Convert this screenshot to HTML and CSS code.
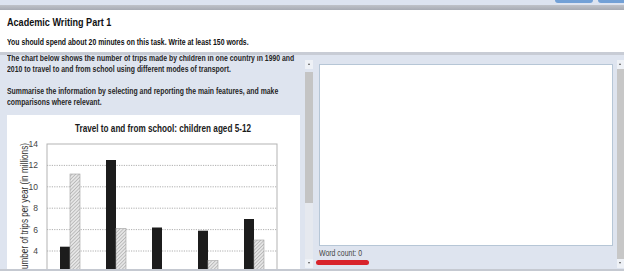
FILE: index.html
```html
<!DOCTYPE html>
<html lang="en">
<head>
  <meta charset="UTF-8" />
  <title>Academic Writing Part 1</title>
  <link rel="stylesheet" href="styles.css">
</head>
<body>

<!-- top toolbar -->
<div class="topbar">
  <span class="tb-btn"></span>
  <span class="tb-btn wide"></span>
</div>
<div class="topbar-rule"></div>

<!-- task header -->
<div class="header">
  <h1>Academic Writing Part 1</h1>
  <p>You should spend about 20 minutes on this task. Write at least 150 words.</p>
</div>
<div class="header-rule"></div>

<div class="main">

  <!-- question pane -->
  <div class="question">
    <div class="question-inner">
      <div class="prompt">
        <p>The chart below shows the number of trips made by children in one country in 1990 and 2010 to travel to and from school using different modes of transport.</p>
        <p>Summarise the information by selecting and reporting the main features, and make comparisons where relevant.</p>
      </div>

      <div class="chart">
        <svg width="293" height="160" viewBox="0 0 293 160">
          <defs>
            <pattern id="hatch" patternUnits="userSpaceOnUse" width="2.5" height="2.5" patternTransform="rotate(45)">
              <rect width="2.5" height="2.5" fill="#e6e6e6"/>
              <line x1="0" y1="0" x2="0" y2="2.5" stroke="#8f8f8f" stroke-width="0.9"/>
            </pattern>
          </defs>

          <text class="chart-title" x="156" y="17" text-anchor="middle" textLength="176" lengthAdjust="spacingAndGlyphs">Travel to and from school: children aged 5-12</text>

          <text class="axis-title" transform="translate(21,28) rotate(-90)" text-anchor="end" textLength="132" lengthAdjust="spacingAndGlyphs">Number of trips per year (in millions)</text>

          <!-- grid -->
          <g class="grid">
            <line x1="40" y1="50.4" x2="270" y2="50.4"/>
            <line x1="40" y1="71.8" x2="270" y2="71.8"/>
            <line x1="40" y1="93.2" x2="270" y2="93.2"/>
            <line x1="40" y1="114.6" x2="270" y2="114.6"/>
            <line x1="40" y1="136" x2="270" y2="136"/>
            <line x1="40" y1="157.4" x2="270" y2="157.4"/>
          </g>
          <rect class="frame" x="40" y="29" width="230" height="160"/>

          <g class="ticks">
            <text x="31" y="32">14</text>
            <text x="31" y="53.4">12</text>
            <text x="31" y="74.8">10</text>
            <text x="31" y="96.2">8</text>
            <text x="31" y="117.6">6</text>
            <text x="31" y="139">4</text>
          </g>

          <!-- 1990 = black, 2010 = hatched -->
          <g class="bar-dark">
            <rect x="53" y="131.7" width="10" height="60"/>
            <rect x="99" y="45" width="10" height="150"/>
            <rect x="145" y="112.5" width="10" height="80"/>
            <rect x="191" y="115.7" width="10" height="80"/>
            <rect x="237" y="104" width="10" height="90"/>
          </g>
          <g class="bar-light">
            <rect x="63" y="59" width="10" height="140"/>
            <rect x="109" y="113.5" width="10" height="80"/>
            <rect x="155" y="170" width="10" height="30"/>
            <rect x="201" y="145.6" width="10" height="50"/>
            <rect x="247" y="125" width="10" height="70"/>
          </g>
        </svg>
      </div>
    </div>
  </div>

  <div class="scrollbar left-bar">
    <span class="arrow up"></span>
    <span class="thumb"></span>
    <span class="track"></span>
    <span class="arrow down"></span>
  </div>

  <!-- answer pane -->
  <div class="answer">
    <textarea class="answer-box"></textarea>
    <div class="word-count">Word count: 0</div>
    <div class="red-line"></div>
  </div>

  <div class="scrollbar right-bar">
    <span class="arrow up"></span>
    <span class="thumb"></span>
    <span class="arrow down"></span>
  </div>
</div>

<div class="footer-rule"></div>

</body>
</html>
```

FILE: styles.css
```css
/* page */
body {
  margin: 0;
  width: 624px;
  height: 279px;
  overflow: hidden;
  background: #ffffff;
  font-family: "Liberation Sans", Arial, sans-serif;
  color: #1e1e1e;
}

/* toolbar strip */
.topbar {
  height: 5px;
  background: #dce3f0;
  display: flex;
  justify-content: flex-end;
  gap: 5px;
}

.tb-btn {
  width: 38px;
  height: 3px;
  background: #72a0d6;
  border-radius: 0 0 3px 3px;
}

.tb-btn.wide {
  width: 30px;
  margin-right: -4px;
}

.topbar-rule {
  height: 5px;
  background: linear-gradient(#bfc2c9, #a7abb4);
}

/* header (the screenshot text is a bit condensed) */
.header {
  height: 42px;
  padding: 0 7px;
  background: #ffffff;
}

.header h1 {
  margin: 0;
  padding-top: 5px;
  font-size: 11.8px;
  line-height: 14px;
  font-weight: bold;
  color: #111;
  transform: scaleX(0.77);
  transform-origin: 0 0;
}

.header p {
  margin: 0;
  padding-top: 8px;
  font-size: 8.6px;
  line-height: 10px;
  font-weight: bold;
  color: #111;
  transform: scaleX(0.8);
  transform-origin: 0 0;
}

.header-rule {
  height: 3px;
  background: #c8ccd5;
}

/* main area */
.main {
  height: 214px;
  display: flex;
  background: #dee4ef;
}

.question {
  width: 303px;
  overflow: hidden;
  flex-shrink: 0;
}

.question-inner {
  margin-top: -3px;
  padding-left: 7px;
}

.prompt {
  width: 366px;
  transform: scaleX(0.8);
  transform-origin: 0 0;
}

.prompt p {
  margin: 0 0 10.5px;
  font-size: 8.6px;
  line-height: 11px;
  font-weight: bold;
  color: #262626;
}

.prompt p:first-child {
  padding-top: 1px;
}

.prompt p:last-child {
  margin-bottom: 7.5px;
}

.chart {
  width: 293px;
  height: 160px;
  background: #ffffff;
}

.chart svg {
  display: block;
}

.chart-title {
  font-size: 10px;
  font-weight: bold;
  fill: #1a1a1a;
}

.axis-title {
  font-size: 10px;
  fill: #333;
}

.ticks text {
  font-size: 8.5px;
  fill: #444;
  text-anchor: end;
}

.grid line {
  stroke: #9a9a9a;
  stroke-width: 0.8;
  stroke-dasharray: 1.2 1.2;
}

.frame {
  fill: none;
  stroke: #b3b3b3;
  stroke-width: 1;
}

.bar-dark rect {
  fill: #1c1c1c;
}

.bar-light rect {
  fill: url(#hatch);
  stroke: #a0a0a0;
  stroke-width: 0.6;
}

/* fake scrollbars */
.scrollbar {
  display: flex;
  flex-direction: column;
  flex-shrink: 0;
  padding: 5px 0 1px;
}

.left-bar {
  width: 8px;
  margin-left: 2px;
}

.right-bar {
  width: 7px;
}

.arrow {
  height: 9px;
  background: #eef1f6;
  position: relative;
}

.arrow::after {
  content: "";
  position: absolute;
  left: 50%;
  top: 3px;
  margin-left: -1.5px;
  border-left: 1.5px solid transparent;
  border-right: 1.5px solid transparent;
}

.arrow.up::after {
  border-bottom: 2px solid #555;
}

.arrow.down::after {
  border-top: 2px solid #555;
}

.left-bar .thumb {
  height: 131px;
  margin-top: 3px;
  background: #c4c4c4;
}

.left-bar .track {
  flex: 1;
  background: #e6e9ef;
}

.right-bar .thumb {
  flex: 1;
  background: #c7c7c7;
}

/* answer */
.answer {
  flex: 1;
  padding: 9px 4px 0 6px;
  display: flex;
  flex-direction: column;
}

.answer-box {
  height: 182px;
  margin: 0;
  padding: 0;
  border: 1px solid #b6c6d6;
  background: #ffffff;
  resize: none;
  box-sizing: border-box;
}

.word-count {
  margin-top: 2px;
  font-size: 9px;
  line-height: 10px;
  color: #444;
  transform: scaleX(0.77);
  transform-origin: 0 0;
}

.red-line {
  width: 53px;
  height: 5px;
  margin: 2px 0 0 -3px;
  background: #d8232b;
  border-radius: 3px;
}

.footer-rule {
  height: 2px;
  background: #c5c9d1;
}
```
